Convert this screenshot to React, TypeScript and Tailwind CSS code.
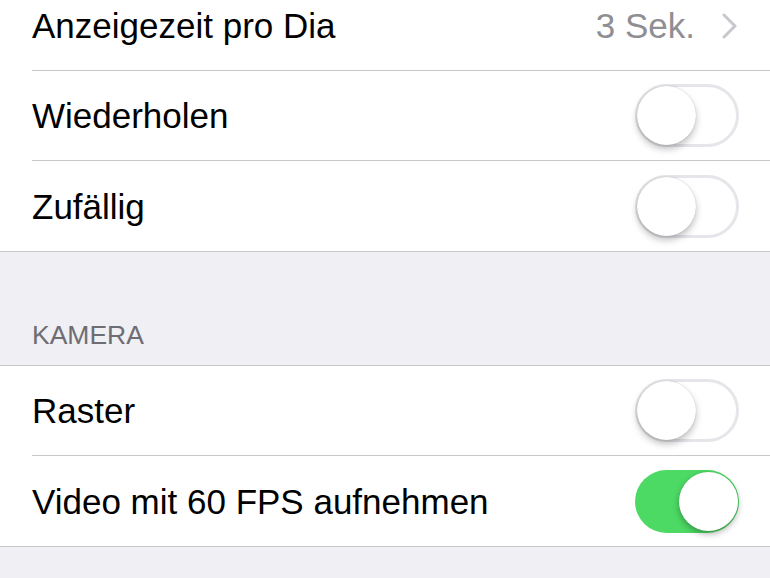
import React from "react";

const font = { fontFamily: '"Liberation Sans", Arial, sans-serif' };

function Toggle({ on }: { on: boolean }) {
  return on ? (
    <div className="relative w-[104px] h-[63px] rounded-full bg-[#4cd964] shrink-0">
      <div className="absolute right-[1px] top-[2px] w-[59px] h-[59px] rounded-full bg-white shadow-[0_3px_6px_rgba(0,0,0,0.3),0_0_1px_rgba(0,0,0,0.2)]" />
    </div>
  ) : (
    <div className="relative w-[104px] h-[63px] rounded-full bg-white border-[3px] border-[#e5e5ea] shrink-0">
      <div className="absolute left-[-1px] top-[-1px] w-[59px] h-[59px] rounded-full bg-white shadow-[0_4px_7px_rgba(0,0,0,0.25),0_0_1px_rgba(0,0,0,0.25)]" />
    </div>
  );
}

function Row({
  label,
  last,
  children,
}: {
  label: string;
  last?: boolean;
  children: React.ReactNode;
}) {
  return (
    <div className={last ? "bg-white border-b border-[#c8c7cc]" : "bg-white pl-8"}>
      <div
        className={
          "h-[90px] flex items-center justify-between pr-[31px] " +
          (last ? "pl-8" : "border-b border-[#c8c7cc]")
        }
      >
        <span className="text-[35px] text-black leading-none">{label}</span>
        {children}
      </div>
    </div>
  );
}

export default function App() {
  return (
    <div className="w-[770px] h-[578px] overflow-hidden bg-[#efeff4]" style={font}>
      <div className="mt-[-19px]">
        <Row label="Anzeigezeit pro Dia">
          <div className="flex items-center gap-[27px] pr-[1px]">
            <span className="text-[35px] text-[#8e8e93] leading-none">3 Sek.</span>
            <svg width="16" height="26" viewBox="0 0 16 26" className="block">
              <polyline
                points="2,2 13,13 2,24"
                fill="none"
                stroke="#c7c7cc"
                strokeWidth="3"
                strokeLinecap="round"
                strokeLinejoin="round"
              />
            </svg>
          </div>
        </Row>
        <Row label="Wiederholen">
          <Toggle on={false} />
        </Row>
        <Row label="Zufällig" last>
          <Toggle on={false} />
        </Row>
      </div>
      <div className="h-[114px] flex items-end pl-8 pb-[17px] border-b border-[#c8c7cc]">
        <span className="text-[26.5px] text-[#6d6d72] leading-none">KAMERA</span>
      </div>
      <Row label="Raster">
        <Toggle on={false} />
      </Row>
      <Row label="Video mit 60 FPS aufnehmen" last>
        <Toggle on={true} />
      </Row>
    </div>
  );
}
